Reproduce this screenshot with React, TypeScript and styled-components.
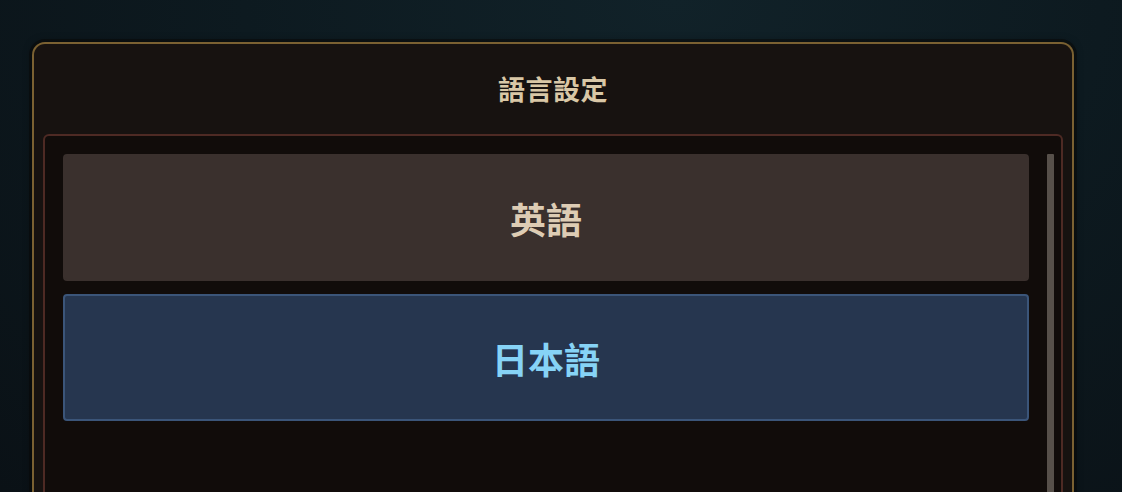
import styled, { createGlobalStyle } from "styled-components";

type Language = {
  id: string;
  label: string;
};

const languages: Language[] = [
  { id: "en", label: "英語" },
  { id: "ja", label: "日本語" },
];

const GlobalStyle = createGlobalStyle`
  html, body {
    margin: 0;
    padding: 0;
    height: 100%;
    overflow: hidden;
  }

  body {
    background: radial-gradient(
      ellipse at 60% 0%,
      #112229 0%,
      #0d1a20 45%,
      #0a1116 100%
    );
    font-family: "Noto Sans CJK TC", "Noto Sans", sans-serif;
  }
`;

export default function App() {
  const selected = "ja";

  return (
    <>
      <GlobalStyle />
      <Page>
        <Panel>
          <PanelTitle>語言設定</PanelTitle>
          <ListFrame>
            <OptionList>
              {languages.map((lang) => (
                <OptionButton key={lang.id} $active={lang.id === selected}>
                  {lang.label}
                </OptionButton>
              ))}
            </OptionList>
            <ScrollRail />
          </ListFrame>
        </Panel>
      </Page>
    </>
  );
}

const Page = styled.div`
  height: 492px;
  padding: 42px 0 0 32px;
  box-sizing: border-box;
`;

const Panel = styled.div`
  width: 1042px;
  height: 470px;
  box-sizing: border-box;
  background: #171210;
  border: 2px solid #7b6132;
  border-bottom: none;
  border-radius: 13px 13px 0 0;
  box-shadow: 0 0 0 3px rgba(8, 6, 5, 0.45), 0 0 10px rgba(0, 0, 0, 0.4);
  padding: 0 9px;
  display: flex;
  flex-direction: column;
`;

const PanelTitle = styled.h2`
  margin: 0;
  height: 90px;
  display: flex;
  align-items: center;
  justify-content: center;
  padding-bottom: 2px;
  box-sizing: border-box;
  color: #d9c7a6;
  font-size: 27px;
  font-weight: 700;
  letter-spacing: 0.5px;
`;

const ListFrame = styled.div`
  flex: 1;
  display: flex;
  background: #110c0a;
  border: 2px solid #4e2a24;
  border-bottom: none;
  border-radius: 6px 6px 0 0;
  padding: 18px 7px 0 18px;
`;

const OptionList = styled.div`
  flex: 1;
  display: flex;
  flex-direction: column;
  gap: 13px;
`;

const OptionButton = styled.button<{ $active: boolean }>`
  height: 127px;
  box-sizing: border-box;
  border-radius: 4px;
  border: 2px solid ${(p) => (p.$active ? "#3b5579" : "#3a302d")};
  background: ${(p) => (p.$active ? "#26364f" : "#3a302d")};
  color: ${(p) => (p.$active ? "#86d3f6" : "#ddccb4")};
  font-family: "Noto Sans CJK TC", "Noto Sans", sans-serif;
  font-size: 36px;
  font-weight: 700;
  cursor: pointer;
  display: flex;
  align-items: center;
  justify-content: center;
  padding: 0;
`;

const ScrollRail = styled.div`
  width: 7px;
  margin-left: 18px;
  background: #57504a;
  border-radius: 1px 1px 0 0;
`;
